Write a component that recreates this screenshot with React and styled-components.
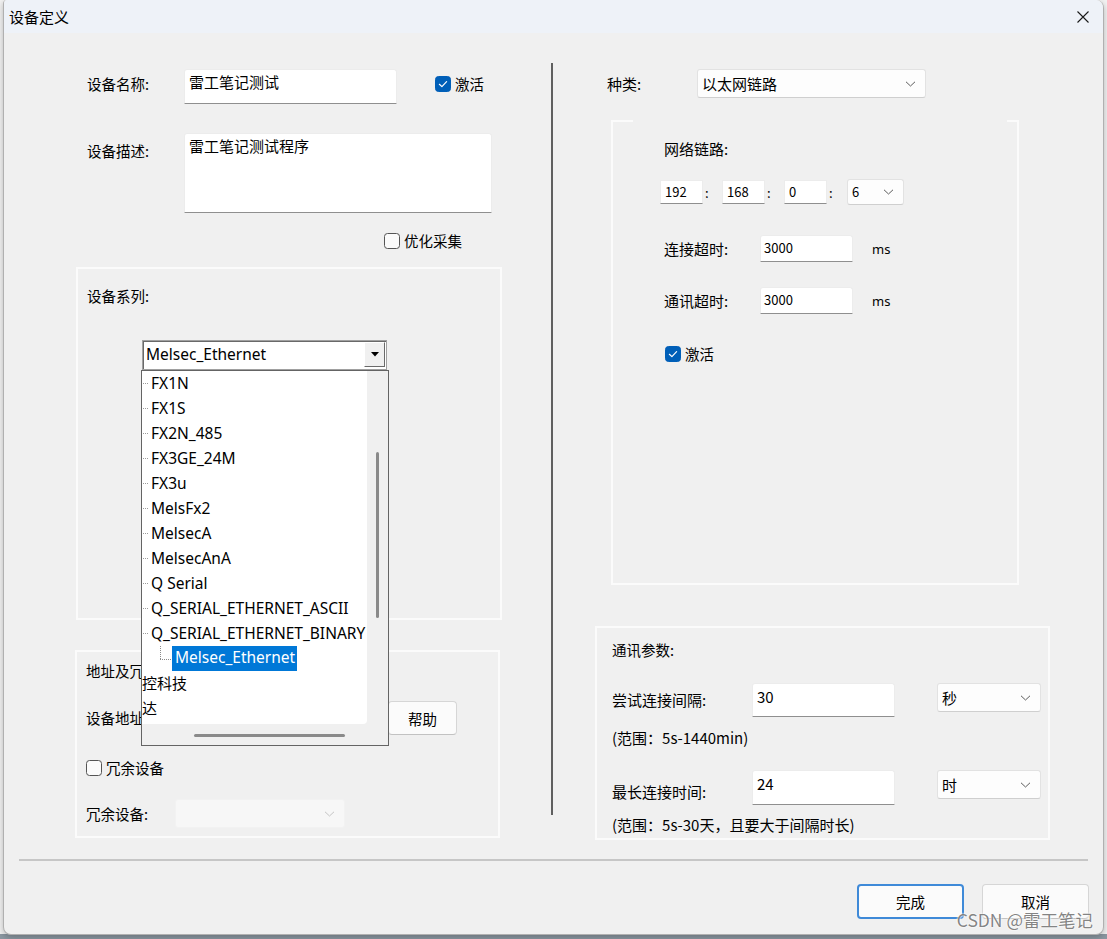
import React from 'react';
import styled, { createGlobalStyle } from 'styled-components';

const CJK = `"Noto Sans CJK SC", "Noto Sans", sans-serif`;
const LATIN = `"Noto Sans", "Noto Sans CJK SC", sans-serif`;

const Global = createGlobalStyle`
  html, body { margin: 0; padding: 0; }
  body { font-family: ${CJK}; color: #000; background: #f2f2f2; }
  * { box-sizing: border-box; }
`;

const Screen = styled.div`
  width: 1107px;
  height: 939px;
  overflow: hidden;
  padding: 0 3px;
  background: linear-gradient(to bottom, #f2f2f2 0, #f2f2f2 934px, #8b97a1 934px);
`;

const Dialog = styled.div`
  width: 1101px;
  height: 935px;
  background: #f0f0f0;
  border: 1px solid #b0b0b0;
  border-top: none;
  border-radius: 4px 8px 8px 8px;
  display: flex;
  flex-direction: column;
  position: relative;
  overflow: hidden;
  box-shadow: 0 2px 6px rgba(0, 0, 0, 0.25);
`;

const TitleBar = styled.div`
  height: 33px;
  flex-shrink: 0;
  background: #eef2f8;
  display: flex;
  align-items: center;
  padding-left: 5px;
  font-size: 15px;
`;

const CloseBtn = styled.div`
  margin-left: auto;
  width: 40px;
  height: 33px;
  display: flex;
  align-items: center;
  justify-content: center;
`;

const Body = styled.div`
  height: 826px;
  flex-shrink: 0;
  display: flex;
  align-items: flex-start;
  padding-left: 71px;
`;

const LeftCol = styled.div`
  width: 426px;
  padding-top: 36px;
  display: flex;
  flex-direction: column;
`;

const RightCol = styled.div`
  width: 455px;
  margin-left: 42px;
  padding-top: 36px;
  display: flex;
  flex-direction: column;
`;

const VSep = styled.div`
  width: 2px;
  height: 752px;
  margin-top: 30px;
  margin-left: 50px;
  background: #5f5f5f;
`;

const Row = styled.div`
  display: flex;
  align-items: ${(p) => p.$align || 'center'};
  margin-top: ${(p) => p.$mt || 0}px;
  margin-left: ${(p) => p.$ml || 0}px;
  height: ${(p) => (p.$h ? `${p.$h}px` : 'auto')};
`;

const Label = styled.span`
  font-size: ${(p) => p.$size || 14.5}px;
  width: ${(p) => (p.$w ? `${p.$w}px` : 'auto')};
  margin-top: ${(p) => p.$mt || 0}px;
  flex-shrink: 0;
  line-height: 20px;
  white-space: nowrap;
`;

const TextBox = styled.div`
  width: ${(p) => p.$w}px;
  height: ${(p) => p.$h}px;
  flex-shrink: 0;
  background: #fff;
  border: 1px solid #ececec;
  border-bottom: 1px solid #8f8f8f;
  border-radius: 3px 3px 0 0;
  padding: ${(p) => p.$pad || '2px 4px'};
  font-size: ${(p) => p.$fs || 15}px;
  line-height: 20px;
  white-space: nowrap;
  overflow: hidden;
`;

const Combo = styled.div`
  width: ${(p) => p.$w}px;
  height: ${(p) => p.$h}px;
  margin-left: ${(p) => p.$ml || 0}px;
  flex-shrink: 0;
  display: flex;
  align-items: center;
  justify-content: space-between;
  padding: 0 9px 0 ${(p) => p.$pl || 4}px;
  background: ${(p) => (p.$disabled ? '#f7f7f7' : '#fdfdfd')};
  border: 1px solid ${(p) => (p.$disabled ? '#f2f2f2' : '#e2e2e2')};
  border-bottom-color: ${(p) => (p.$disabled ? '#f2f2f2' : '#cfcfcf')};
  border-radius: 3px;
  font-size: ${(p) => p.$fs || 15}px;
  line-height: 20px;
`;

const CheckRow = styled.label`
  display: flex;
  align-items: center;
  gap: 4px;
  font-size: ${(p) => p.$size || 14.5}px;
  line-height: 20px;
  margin-left: ${(p) => p.$ml || 0}px;
  margin-top: ${(p) => p.$mt || 0}px;
  align-self: flex-start;
`;

const Group = styled.div`
  position: relative;
  width: ${(p) => p.$w}px;
  height: ${(p) => p.$h}px;
  margin-top: ${(p) => p.$mt || 0}px;
  margin-left: ${(p) => p.$ml || 0}px;
  border: 2px solid #fbfbfb;
  border-top-color: ${(p) => (p.$gap ? 'transparent' : '#fbfbfb')};
  padding: ${(p) => p.$pad};
  display: flex;
  flex-direction: column;
  &::before, &::after {
    content: '';
    display: ${(p) => (p.$gap ? 'block' : 'none')};
    position: absolute;
    top: -2px;
    height: 2px;
    background: #fbfbfb;
  }
  &::before { left: -2px; width: 22px; }
  &::after { right: -2px; width: 12px; }
`;

/* classic combo + popup tree */
const ClassicWrap = styled.div`
  position: relative;
  width: 245px;
  height: 30px;
  margin-top: ${(p) => p.$mt}px;
  margin-left: ${(p) => p.$ml}px;
`;

const ClassicCombo = styled.div`
  width: 245px;
  height: 30px;
  background: #fff;
  border: 1px solid #a0a0a0;
  box-shadow: inset 1px 1px 0 #696969;
  display: flex;
  align-items: center;
  padding: 0 0 2px 3px;
  font-family: ${LATIN};
  font-size: 15.5px;
`;

const ClassicBtn = styled.div`
  margin-left: auto;
  margin-right: 1px;
  width: 21px;
  height: 25px;
  background: #f0f0f0;
  border: 1px solid;
  border-color: #fff #6a6a6a #6a6a6a #fff;
  display: flex;
  align-items: center;
  justify-content: center;
`;

const Popup = styled.div`
  position: absolute;
  top: 30px;
  left: -1px;
  width: 248px;
  height: 376px;
  z-index: 5;
  border: 1px solid #646464;
  background: #f0f0f0;
  display: grid;
  grid-template-columns: 225px 1fr;
  grid-template-rows: 353px 1fr;
`;

const TreeArea = styled.div`
  background: #fff;
  border-bottom-right-radius: 4px;
  overflow: hidden;
  font-family: ${LATIN};
  font-size: 15.5px;
`;

const VTrack = styled.div`
  display: flex;
  justify-content: center;
  padding-top: 81px;
`;

const VThumb = styled.div`
  width: 3px;
  height: 166px;
  border-radius: 2px;
  background: #8a8a8a;
`;

const HTrack = styled.div`
  grid-column: 1 / span 2;
  padding: 10px 0 0 52px;
`;

const HThumb = styled.div`
  width: 151px;
  height: 3px;
  border-radius: 2px;
  background: #8a8a8a;
`;

const TreeRow = styled.div`
  height: 25px;
  display: flex;
  align-items: center;
  white-space: nowrap;
  padding-bottom: 2px;
  font-family: ${(p) => (p.$cjk ? CJK : 'inherit')};
  font-size: ${(p) => (p.$cjk ? '15px' : 'inherit')};
`;

const Dots = styled.span`
  width: 5px;
  margin: 2px 3px 0 1px;
  border-top: 1px dotted #9a9a9a;
`;

const Elbow = styled.span`
  width: 12px;
  height: 25px;
  margin: 2px 0 0 18px;
  position: relative;
  &::before {
    content: '';
    position: absolute;
    left: 0;
    top: 0;
    height: 13px;
    border-left: 1px dotted #8a8a8a;
  }
  &::after {
    content: '';
    position: absolute;
    left: 0;
    top: 13px;
    width: 11px;
    border-top: 1px dotted #8a8a8a;
  }
`;

const Selected = styled.span`
  background: #0078d7;
  color: #fff;
  height: 25px;
  line-height: 23px;
  margin-top: 2px;
  padding: 0 2px 0 3px;
`;

const Button = styled.div`
  width: ${(p) => p.$w}px;
  height: ${(p) => p.$h}px;
  margin-left: ${(p) => p.$ml || 0}px;
  flex-shrink: 0;
  display: flex;
  align-items: center;
  justify-content: center;
  background: #fbfbfb;
  border: ${(p) => (p.$primary ? '2px solid #3f8ad8' : '1px solid #d6d6d6')};
  border-bottom-color: ${(p) => (p.$primary ? '#3f8ad8' : '#c2c2c2')};
  border-radius: 4px;
  font-size: 14.5px;
`;

const Divider = styled.div`
  height: 2px;
  margin: 0 15px;
  background: #c6c6c6;
  flex-shrink: 0;
`;

const Footer = styled.div`
  flex: 1;
  position: relative;
  display: flex;
  justify-content: flex-end;
  align-items: flex-start;
  padding: 23px 14px 0 0;
  gap: 18px;
`;

const Watermark = styled.span`
  position: absolute;
  right: 10px;
  bottom: 3px;
  font-size: 17.5px;
  line-height: 22px;
  color: rgba(110, 110, 110, 0.85);
  text-shadow: 0 0 2px #fff, 0 0 2px #fff;
`;

const Unit = styled.span`
  font-family: ${LATIN};
  font-size: 13px;
  margin-left: 19px;
`;

const IpBox = styled.div`
  width: 43px;
  height: 24px;
  background: #fff;
  border: 1px solid #ececec;
  border-bottom: 1px solid #8f8f8f;
  padding: 1px 4px;
  font-size: 13px;
  line-height: 20px;
`;

const IpSep = styled.span`
  width: ${(p) => p.$w || 19}px;
  padding-left: 2px;
  font-size: 13px;
`;

const Hint = styled.div`
  font-size: 15px;
  line-height: 20px;
  margin-top: ${(p) => p.$mt}px;
`;

const Chevron = ({ light }) => (
  <svg width="11" height="6" viewBox="0 0 11 6">
    <path d="M1 0.8 L5.5 5 L10 0.8" fill="none" stroke={light ? '#c4c4c4' : '#5c5c5c'} strokeWidth="1" />
  </svg>
);

const Box = ({ checked }) => (
  <svg width="16" height="16" viewBox="0 0 16 16">
    {checked ? (
      <>
        <rect x="0.5" y="0.5" width="15" height="15" rx="3" fill="#005fb8" stroke="#005fb8" />
        <path d="M4.4 8.3 L6.9 10.6 L11.6 5.7" fill="none" stroke="#fff" strokeWidth="1.2" strokeLinecap="round" strokeLinejoin="round" />
      </>
    ) : (
      <rect x="0.5" y="0.5" width="15" height="15" rx="3" fill="#fbfbfb" stroke="#555" />
    )}
  </svg>
);

const treeItems = [
  'FX1N', 'FX1S', 'FX2N_485', 'FX3GE_24M', 'FX3u', 'MelsFx2', 'MelsecA',
  'MelsecAnA', 'Q Serial', 'Q_SERIAL_ETHERNET_ASCII', 'Q_SERIAL_ETHERNET_BINARY',
];

export default function App() {
  return (
    <>
      <Global />
      <Screen>
        <Dialog>
          <TitleBar>
            设备定义
            <CloseBtn>
              <svg width="12" height="12" viewBox="0 0 12 12">
                <path d="M0.5 0.5 L11.5 11.5 M11.5 0.5 L0.5 11.5" stroke="#1a1a1a" strokeWidth="1.1" />
              </svg>
            </CloseBtn>
          </TitleBar>

          <Body>
            <LeftCol>
              <Row $h={35} $ml={12} $align="flex-start">
                <Label $w={97} $mt={5}>设备名称:</Label>
                <TextBox $w={213} $h={35}>雷工笔记测试</TextBox>
                <CheckRow $ml={38} $mt={5}>
                  <Box checked />
                  激活
                </CheckRow>
              </Row>

              <Row $align="flex-start" $mt={29} $ml={12}>
                <Label $w={97} $mt={8}>设备描述:</Label>
                <TextBox $w={308} $h={80}>雷工笔记测试程序</TextBox>
              </Row>

              <CheckRow $ml={309} $mt={18}>
                <Box />
                优化采集
              </CheckRow>

              <Group $w={426} $h={353} $mt={16} $ml={1} $pad="17px 0 0 9px">
                <Label>设备系列:</Label>
                <ClassicWrap $mt={34} $ml={55}>
                  <ClassicCombo>
                    Melsec_Ethernet
                    <ClassicBtn>
                      <svg width="8" height="5" viewBox="0 0 8 5">
                        <path d="M0 0 H8 L4 4.5 Z" fill="#000" />
                      </svg>
                    </ClassicBtn>
                  </ClassicCombo>
                  <Popup>
                    <TreeArea>
                      {treeItems.map((t) => (
                        <TreeRow key={t}>
                          <Dots />
                          {t}
                        </TreeRow>
                      ))}
                      <TreeRow>
                        <Elbow />
                        <Selected>Melsec_Ethernet</Selected>
                      </TreeRow>
                      <TreeRow $cjk>控科技</TreeRow>
                      <TreeRow $cjk>达</TreeRow>
                    </TreeArea>
                    <VTrack>
                      <VThumb />
                    </VTrack>
                    <HTrack>
                      <HThumb />
                    </HTrack>
                  </Popup>
                </ClassicWrap>
              </Group>

              <Group $w={425} $h={188} $mt={30} $pad="9px 0 0 9px">
                <Label>地址及冗余设置</Label>
                <Row $mt={20}>
                  <Label $w={90}>设备地址:</Label>
                  <TextBox $w={200} $h={30} />
                  <Button $w={69} $h={34} $ml={12}>帮助</Button>
                </Row>
                <CheckRow $mt={23}>
                  <Box />
                  冗余设备
                </CheckRow>
                <Row $mt={21}>
                  <Label $w={89}>冗余设备:</Label>
                  <Combo $w={170} $h={29} $disabled>
                    <span />
                    <Chevron light />
                  </Combo>
                </Row>
              </Group>
            </LeftCol>

            <VSep />

            <RightCol>
              <Row $h={29} $ml={12}>
                <Label $w={90} $size={15}>种类:</Label>
                <Combo $w={229} $h={29}>
                  以太网链路
                  <Chevron />
                </Combo>
              </Row>

              <Group $w={408} $h={465} $mt={22} $ml={16} $pad="17px 0 0 51px" $gap>
                <Label $size={15}>网络链路:</Label>
                <Row $mt={20} $ml={-4}>
                  <IpBox>192</IpBox>
                  <IpSep>:</IpSep>
                  <IpBox>168</IpBox>
                  <IpSep>:</IpSep>
                  <IpBox>0</IpBox>
                  <IpSep $w={20}>:</IpSep>
                  <Combo $w={57} $h={26} $fs={13} $pl={4}>
                    6
                    <Chevron />
                  </Combo>
                </Row>
                <Row $mt={30}>
                  <Label $w={96} $size={15}>连接超时:</Label>
                  <TextBox $w={93} $h={27} $fs={13} $pad="2px 3px">3000</TextBox>
                  <Unit>ms</Unit>
                </Row>
                <Row $mt={25}>
                  <Label $w={96} $size={15}>通讯超时:</Label>
                  <TextBox $w={93} $h={27} $fs={13} $pad="2px 3px">3000</TextBox>
                  <Unit>ms</Unit>
                </Row>
                <CheckRow $mt={30} $ml={1}>
                  <Box checked />
                  激活
                </CheckRow>
              </Group>

              <Group $w={455} $h={214} $mt={41} $pad="12px 0 0 15px">
                <Label>通讯参数:</Label>
                <Row $align="flex-start" $mt={23}>
                  <Label $w={140} $size={15} $mt={7}>尝试连接间隔:</Label>
                  <TextBox $w={143} $h={34} $pad="3px 4px">30</TextBox>
                  <Combo $w={104} $h={29} $ml={42}>
                    秒
                    <Chevron />
                  </Combo>
                </Row>
                <Hint $mt={11}>(范围：5s-1440min)</Hint>
                <Row $align="flex-start" $mt={22}>
                  <Label $w={140} $size={15} $mt={12}>最长连接时间:</Label>
                  <TextBox $w={143} $h={35} $pad="3px 4px">24</TextBox>
                  <Combo $w={104} $h={29} $ml={42}>
                    时
                    <Chevron />
                  </Combo>
                </Row>
                <Hint $mt={10}>(范围：5s-30天，且要大于间隔时长)</Hint>
              </Group>
            </RightCol>
          </Body>

          <Divider />

          <Footer>
            <Button $w={107} $h={35} $primary>完成</Button>
            <Button $w={107} $h={35}>取消</Button>
            <Watermark>CSDN @雷工笔记</Watermark>
          </Footer>
        </Dialog>
      </Screen>
    </>
  );
}
